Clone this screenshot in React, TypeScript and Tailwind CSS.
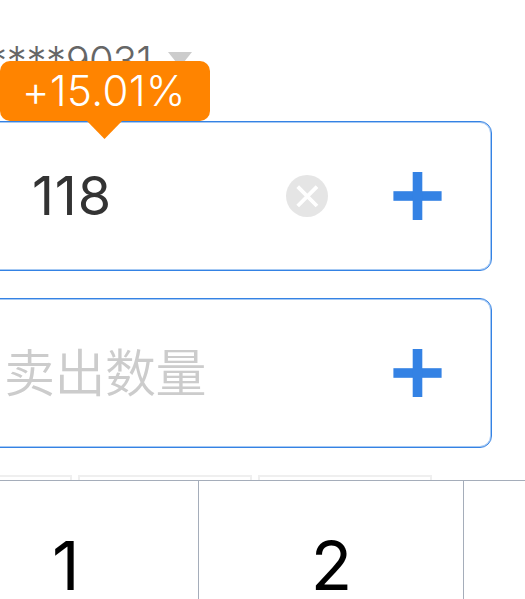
function Plus() {
  return (
    <svg className="h-12 w-[49px] shrink-0" viewBox="0 0 49 48" fill="#3482e4">
      <rect x="0.4" y="19.2" width="48.2" height="9.6" />
      <rect x="19.7" y="0" width="9.6" height="48" />
    </svg>
  );
}

function ClearIcon() {
  return (
    <svg className="mr-[65px] size-[42px] shrink-0" viewBox="0 0 42 42">
      <circle cx="21" cy="21" r="21" fill="#e5e5e5" />
      <path d="M11.7 11.7 31 31M31 11.7 11.7 31" stroke="#fff" strokeWidth="3.8" />
    </svg>
  );
}

const field =
  "-ml-3 flex h-[150px] w-[504px] shrink-0 items-center rounded-xl border border-[#3482e4] pr-[49px] pl-3 shadow-[inset_0_0_0_1px_#a6c9f3]";

export default function App() {
  return (
    <div className="flex h-[599px] w-[525px] flex-col overflow-hidden bg-white font-['Inter','Noto_Sans_CJK_SC',sans-serif]">
      <header className="relative h-[121px] shrink-0">
        <div className="flex pt-[34px]">
          <div className="flex w-[151px] justify-end text-[40px] leading-[54px] font-light tracking-[-0.9px] whitespace-nowrap text-[#666]">
            <span className="tracking-[-0.3px]">*****</span>
            <span>9031</span>
          </div>
          <svg className="mt-[18px] ml-[17px] h-[15px] w-6" viewBox="0 0 24 15" fill="#ccc">
            <path d="M0 0h24L12 15z" />
          </svg>
        </div>
        <div className="absolute top-[61px] left-0 z-10 flex h-[60px] w-[210px] items-center rounded-[10px] bg-[#ff8400] pl-[22px] text-[42px] leading-[60px] font-light text-white">
          <span className="tracking-[0.5px]">+15.01%</span>
          <svg className="absolute top-[59px] left-[86px] h-[19px] w-[37px]" viewBox="0 0 37 19" fill="#ff8400">
            <path d="M0 0h37L18.5 19z" />
          </svg>
        </div>
      </header>
      <section className={field}>
        <span className="ml-[31px] flex-1 text-[54px] leading-none tracking-[0.9px] text-[#333]">118</span>
        <ClearIcon />
        <Plus />
      </section>
      <section className={field + " mt-[27px]"}>
        <span className="ml-[3px] flex-1 text-[51px] leading-none font-[350] tracking-[-0.5px] text-[#ccc]">卖出数量</span>
        <Plus />
      </section>
      <div className="mt-[27px] flex h-[5px] shrink-0 gap-[6px]">
        <div className="w-[72px] border-t-2 border-r-2 border-[#efefef]" />
        <div className="w-[174px] border-x-2 border-t-2 border-[#efefef]" />
        <div className="w-[174px] border-x-2 border-t-2 border-[#efefef]" />
      </div>
      <div className="flex flex-1 border-t border-[#a5adba] text-[68px] leading-none text-black">
        <div className="w-[199px] border-r border-[#a5adba] pt-[50px] pl-[52px]">1</div>
        <div className="w-[265px] border-r border-[#a5adba] pt-[50px] pl-px text-center">2</div>
        <div className="flex-1" />
      </div>
    </div>
  );
}
